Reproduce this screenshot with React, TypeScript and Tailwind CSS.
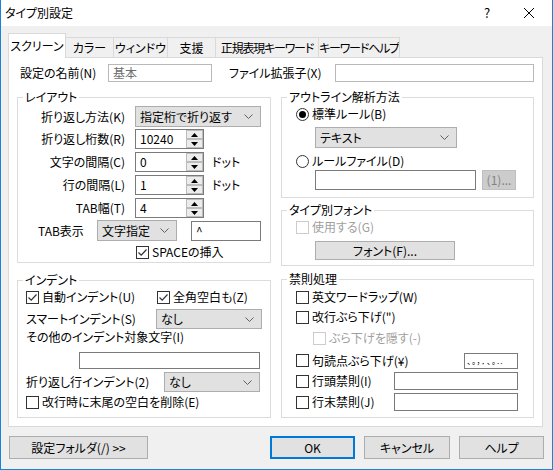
import type { ReactNode } from 'react';

const Chevron = () => (
  <svg width="9" height="5" viewBox="0 0 9 5" className="shrink-0">
    <path d="M0.5 0.5 L4.5 4.5 L8.5 0.5" fill="none" stroke="#606060" strokeWidth="1" />
  </svg>
);

const Combo = ({ value, className = '' }: { value: string; className?: string }) => (
  <div className={`flex items-center justify-between border border-[#adadad] bg-[#e1e1e1] pl-[4px] pr-[7px] ${className}`}>
    <span className="whitespace-nowrap">{value}</span>
    <Chevron />
  </div>
);

const Edit = ({ value = '', className = '', light, muted }: { value?: string; className?: string; light?: boolean; muted?: boolean }) => (
  <div className={`flex items-center border bg-white px-[4px] ${light ? 'border-[#b9b9b9]' : 'border-[#7a7a7a]'} ${className}`}>
    <span className={`whitespace-nowrap ${muted ? 'text-[#6d6d6d]' : ''}`}>{value}</span>
  </div>
);

const SpinBtn = ({ up }: { up?: boolean }) => (
  <div className="flex flex-1 items-center justify-center border border-[#bcbcbc] bg-[#ececec]">
    <svg width="7" height="4" viewBox="0 0 7 4">
      <path d={up ? 'M0 4 L3.5 0 L7 4 Z' : 'M0 0 L3.5 4 L7 0 Z'} fill="#000" />
    </svg>
  </div>
);

const Spin = ({ value }: { value: string }) => (
  <div className="flex h-[20px] w-[69px] border border-[#7a7a7a] bg-white">
    <span className="flex-1 pl-[4px] leading-[18px]">{value}</span>
    <div className="flex w-[17px] flex-col">
      <SpinBtn up />
      <SpinBtn />
    </div>
  </div>
);

const Check = ({ label, checked, disabled, className = '' }: { label: string; checked?: boolean; disabled?: boolean; className?: string }) => (
  <div className={`flex h-[16px] items-center gap-[3px] whitespace-nowrap ${className}`}>
    <span className={`flex h-[13px] w-[13px] shrink-0 items-center justify-center border bg-white ${disabled ? 'border-[#cccccc]' : 'border-[#333333]'}`}>
      {checked && (
        <svg width="11" height="11" viewBox="0 0 11 11">
          <path d="M1.5 5.5 L4.2 8.2 L9.5 2.5" fill="none" stroke="#333" strokeWidth="1.2" />
        </svg>
      )}
    </span>
    <span className={disabled ? 'text-[#a0a0a0]' : ''}>{label}</span>
  </div>
);

const Radio = ({ label, checked, className = '' }: { label: string; checked?: boolean; className?: string }) => (
  <div className={`flex h-[16px] items-center gap-[3px] whitespace-nowrap ${className}`}>
    <span className="flex h-[13px] w-[13px] shrink-0 items-center justify-center rounded-full border border-[#333333] bg-white">
      {checked && <span className="h-[7px] w-[7px] rounded-full bg-[#000]" />}
    </span>
    <span>{label}</span>
  </div>
);

const Group = ({ title, className = '', children }: { title: string; className?: string; children: ReactNode }) => (
  <fieldset className={`border border-[#dcdcdc] ${className}`}>
    <legend className="ml-[5px] px-[2px] leading-[16px]">{title}</legend>
    {children}
  </fieldset>
);

const Button = ({ label, className = '', primary, disabled }: { label: string; className?: string; primary?: boolean; disabled?: boolean }) => (
  <div
    className={`flex items-center justify-center whitespace-nowrap ${
      primary ? 'border-2 border-[#0078d7] bg-[#e1e1e1]' : disabled ? 'border border-[#bfbfbf] bg-[#cccccc] text-[#838383]' : 'border border-[#adadad] bg-[#e1e1e1]'
    } ${className}`}
  >
    {label}
  </div>
);

const tabs = ['スクリーン', 'カラー', 'ウィンドウ', '支援', '正規表現キーワード', 'キーワードヘルプ'];
const tabWidths = ['w-[58px]', 'w-[48px]', 'w-[54px]', 'w-[48px]', 'w-[103px] tracking-[-1.2px]', 'w-[81px] tracking-[-1.2px]'];

const LabelRow = ({ label, children }: { label: string; children: ReactNode }) => (
  <div className="flex items-center">
    <span className="w-[117px] whitespace-nowrap pr-[10px] text-right">{label}</span>
    {children}
  </div>
);

export default function App() {
  return (
    <div className="flex h-[470px] w-[553px] flex-col border-x border-b border-[#1883d7] bg-[#f0f0f0] text-[12px] leading-[16px] text-black font-['Noto_Sans_CJK_JP','Noto_Sans',sans-serif] [font-feature-settings:'palt']">
      {/* title bar */}
      <div className="flex h-[26px] items-center bg-white pl-[4px]">
        <span className="flex-1">タイプ別設定</span>
        <span className="w-[14px] text-[13px]">?</span>
        <span className="ml-[26px] mr-[18px] flex h-[10px] w-[10px]">
          <svg width="10" height="10" viewBox="0 0 10 10">
            <path d="M0 0 L10 10 M10 0 L0 10" stroke="#000" strokeWidth="1" />
          </svg>
        </span>
      </div>

      {/* tabs */}
      <div className="ml-[7px] mt-[7px] flex h-[24px] items-end">
        {tabs.map((t, i) =>
          i === 0 ? (
            <div key={t} className={`relative z-10 -mb-px flex h-[25px] items-start justify-center whitespace-nowrap border-x border-t border-[#d9d9d9] bg-white pt-[4px] ${tabWidths[i]}`}>
              {t}
            </div>
          ) : (
            <div key={t} className={`flex h-[20px] items-center justify-center overflow-hidden whitespace-nowrap border-r border-t border-[#d9d9d9] bg-[#f0f0f0] ${tabWidths[i]}`}>
              {t}
            </div>
          )
        )}
      </div>

      {/* panel */}
      <div className="ml-[7px] h-[370px] w-[535px] border border-[#d9d9d9] bg-white pt-[6px]">
        <div className="flex h-[18px] items-center pl-[11px]">
          <span className="w-[88px] whitespace-nowrap">設定の名前(N)</span>
          <Edit value="基本" light muted className="h-[18px] w-[104px]" />
          <span className="ml-[17px] w-[106px] whitespace-nowrap">ファイル拡張子(X)</span>
          <Edit light className="h-[18px] w-[199px]" />
        </div>

        <div className="mt-[7px] flex gap-[10px] px-[8px]">
          {/* left column */}
          <div className="flex w-[254px] flex-col">
            <Group title="レイアウト" className="h-[174px]">
              <div className="mt-[1px]">
                <LabelRow label="折り返し方法(K)">
                  <Combo value="指定桁で折り返す" className="h-[21px] w-[126px]" />
                </LabelRow>
              </div>
              <div className="mt-[2px]">
                <LabelRow label="折り返し桁数(R)">
                  <Spin value="10240" />
                </LabelRow>
              </div>
              <div className="mt-[3px]">
                <LabelRow label="文字の間隔(C)">
                  <Spin value="0" />
                  <span className="ml-[8px]">ドット</span>
                </LabelRow>
              </div>
              <div className="mt-[3px]">
                <LabelRow label="行の間隔(L)">
                  <Spin value="1" />
                  <span className="ml-[8px]">ドット</span>
                </LabelRow>
              </div>
              <div className="mt-[3px]">
                <LabelRow label="TAB幅(T)">
                  <Spin value="4" />
                </LabelRow>
              </div>
              <div className="mt-[2px] flex items-center pl-[20px]">
                <span className="w-[59px] whitespace-nowrap">TAB表示</span>
                <Combo value="文字指定" className="h-[21px] w-[80px]" />
                <Edit value="^" className="ml-[14px] h-[20px] w-[70px]" />
              </div>
              <Check label="SPACEの挿入" checked className="ml-[118px] mt-[3px]" />
            </Group>

            <Group title="インデント" className="mt-[9px] h-[146px]">
              <div className="mt-[1px] flex pl-[8px]">
                <Check label="自動インデント(U)" checked className="w-[131px]" />
                <Check label="全角空白も(Z)" checked />
              </div>
              <div className="mt-[4px] flex items-center pl-[8px]">
                <span className="w-[130px] whitespace-nowrap">スマートインデント(S)</span>
                <Combo value="なし" className="h-[20px] w-[106px]" />
              </div>
              <div className="pl-[8px]">その他のインデント対象文字(I)</div>
              <Edit className="ml-[61px] mt-[7px] h-[17px] w-[181px]" />
              <div className="mt-[3px] flex items-center pl-[8px]">
                <span className="w-[138px] whitespace-nowrap">折り返し行インデント(2)</span>
                <Combo value="なし" className="h-[20px] w-[96px]" />
              </div>
              <Check label="改行時に末尾の空白を削除(E)" className="ml-[8px] mt-[2px]" />
            </Group>
          </div>

          {/* right column */}
          <div className="flex w-[253px] flex-col">
            <Group title="アウトライン解析方法" className="h-[109px]">
              <Radio label="標準ルール(B)" checked className="ml-[14px] mt-[1px]" />
              <Combo value="テキスト" className="ml-[33px] mt-[5px] h-[21px] w-[142px]" />
              <Radio label="ルールファイル(D)" className="ml-[14px] mt-[5px]" />
              <div className="ml-[33px] mt-[1px] flex items-center">
                <Edit className="h-[20px] w-[161px]" />
                <Button label="(1)..." disabled className="ml-[6px] h-[20px] w-[34px]" />
              </div>
            </Group>

            <Group title="タイプ別フォント" className="mt-[4px] h-[64px]">
              <Check label="使用する(G)" disabled className="ml-[14px] mt-[1px]" />
              <Button label="フォント(F)..." className="ml-[33px] mt-[6px] h-[19px] w-[140px]" />
            </Group>

            <Group title="禁則処理" className="mt-[5px] h-[147px]">
              <Check label="英文ワードラップ(W)" className="ml-[14px] mt-[2px]" />
              <Check label={'改行ぶら下げ(")'} className="ml-[14px] mt-[4px]" />
              <Check label="ぶら下げを隠す(-)" disabled className="ml-[31px] mt-[5px]" />
              <div className="mt-[6px] flex h-[17px] items-center pl-[14px] pr-[15px]">
                <Check label="句読点ぶら下げ(¥)" />
                <div className="ml-auto flex h-[16px] w-[54px] items-center border border-[#7a7a7a] bg-white pl-[2px] text-[8px] leading-[10px] tracking-[1px]">
                  、。，．､｡..
                </div>
              </div>
              <div className="mt-[3px] flex items-center pl-[14px] pr-[15px]">
                <Check label="行頭禁則(I)" />
                <Edit className="ml-auto h-[18px] w-[124px]" />
              </div>
              <div className="mt-[3px] flex items-center pl-[14px] pr-[15px]">
                <Check label="行末禁則(J)" />
                <Edit className="ml-auto h-[18px] w-[124px]" />
              </div>
            </Group>
          </div>
        </div>
      </div>

      {/* bottom buttons */}
      <div className="mt-[9px] flex h-[23px] pl-[8px] pr-[8px]">
        <Button label="設定フォルダ(/) >>" className="w-[139px]" />
        <div className="ml-auto flex gap-[9px]">
          <Button label="OK" primary className="w-[85px]" />
          <Button label="キャンセル" className="w-[86px]" />
          <Button label="ヘルプ" className="w-[85px]" />
        </div>
      </div>
    </div>
  );
}
